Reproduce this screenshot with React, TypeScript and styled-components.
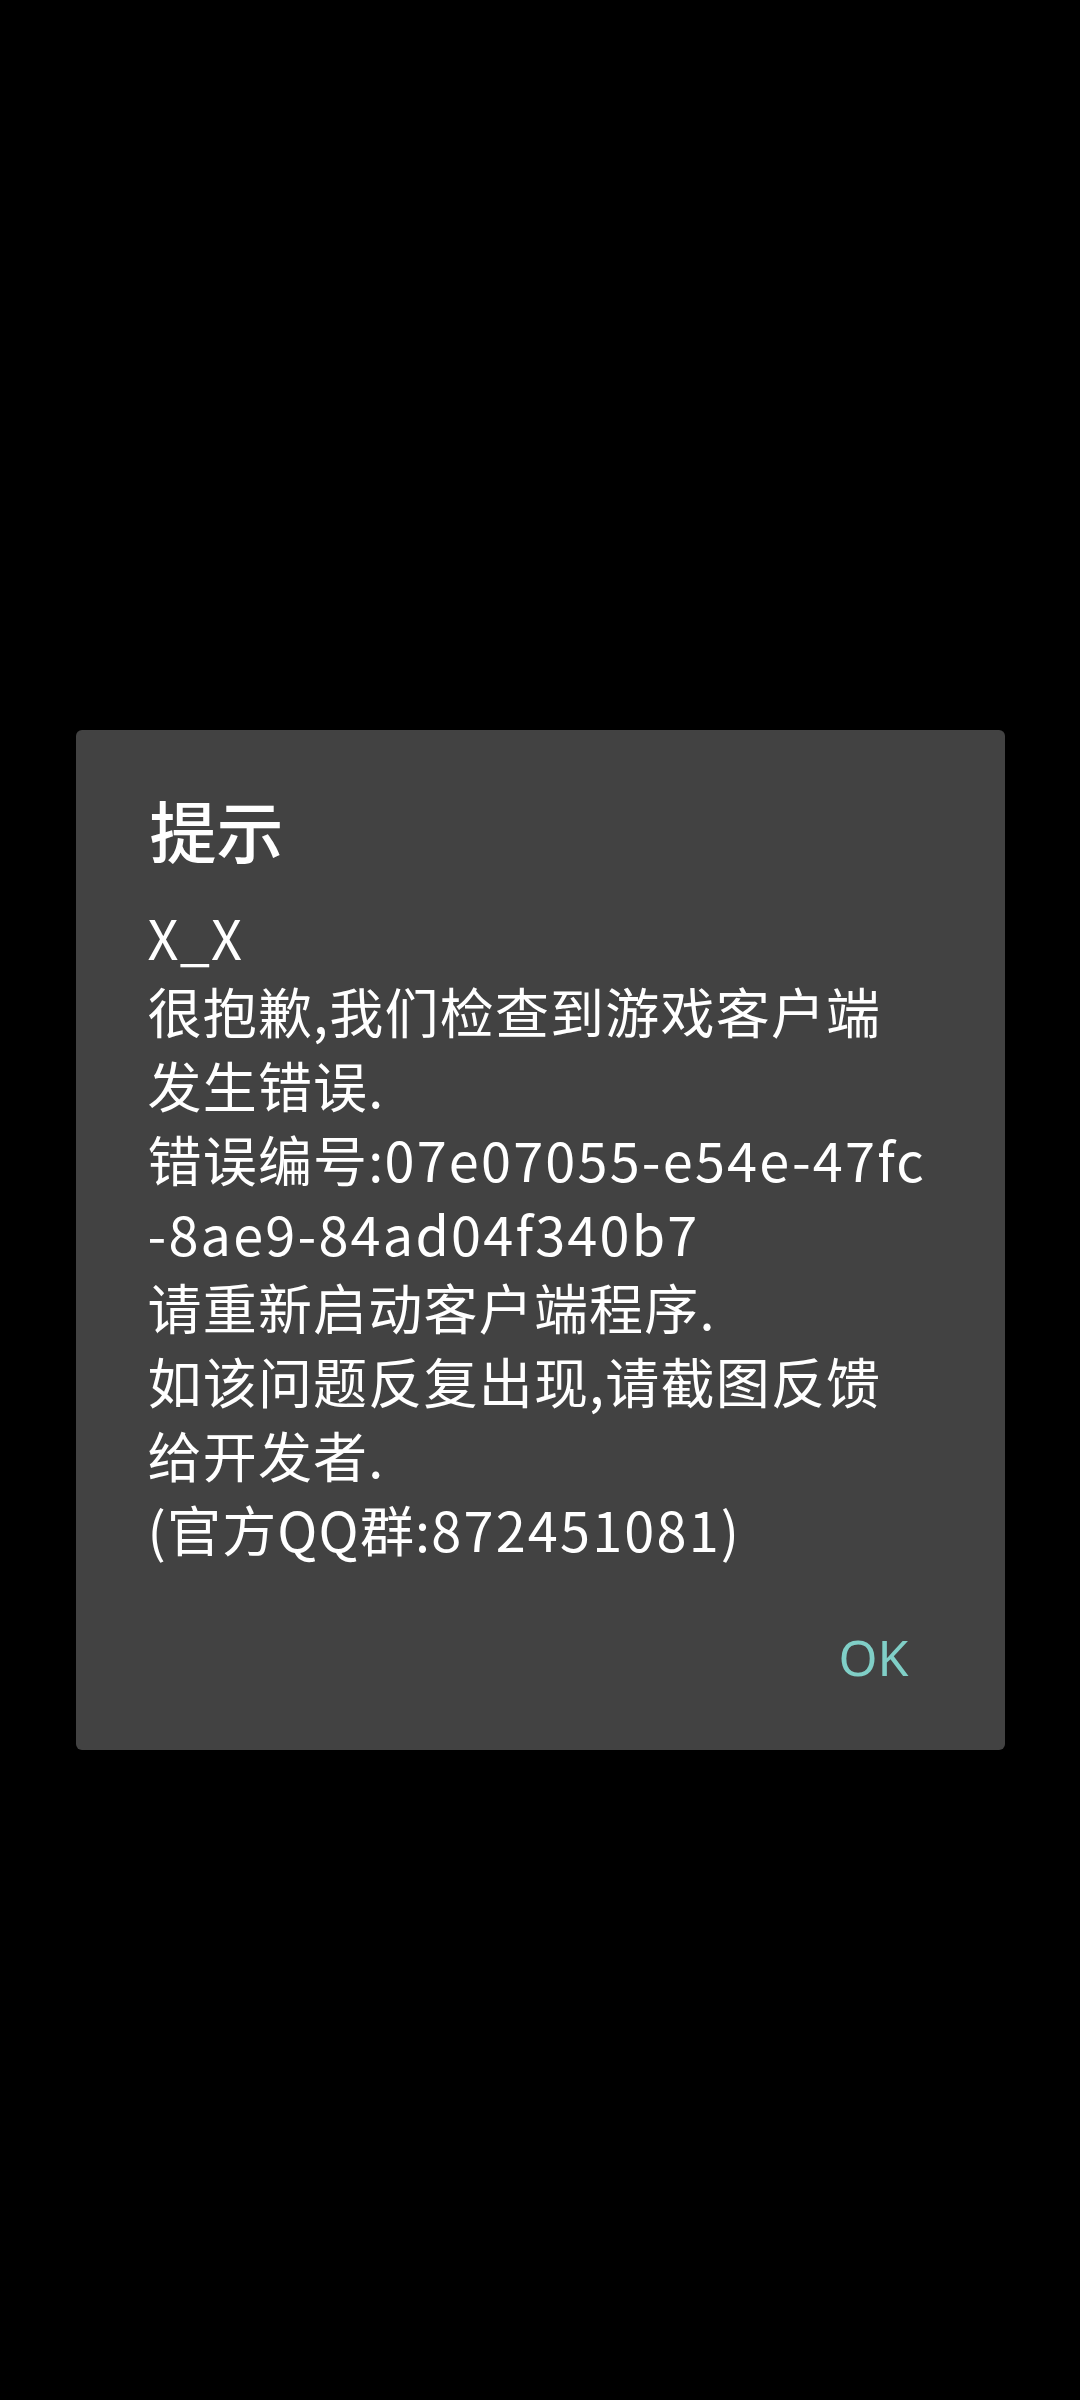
import styled, { createGlobalStyle } from "styled-components";

const GlobalStyle = createGlobalStyle`
    html, body {
        margin: 0;
        padding: 0;
        background: #000000;
    }
    body {
        font-family: "Noto Sans CJK SC", "Noto Sans", sans-serif;
    }
`;

const Screen = styled.div`
    width: 1080px;
    min-height: 2400px;
    background: #000000;
    display: flex;
    flex-direction: column;
    align-items: center;
    padding-top: 730px;
    box-sizing: border-box;
`;

const Dialog = styled.div`
    width: 929px;
    background: #424242;
    border-radius: 6px;
    display: flex;
    flex-direction: column;
    padding-top: 58px;
    box-sizing: border-box;
`;

const Title = styled.div`
    padding: 0 72px 0 74px;
    font-family: "Noto Sans CJK SC", sans-serif;
    font-size: 67px;
    font-weight: 500;
    line-height: 82px;
    color: #ffffff;
`;

const Message = styled.div`
    margin-top: 30px;
    padding: 0 72px;
    display: flex;
    flex-direction: column;
`;

const Line = styled.div`
    font-family: "Noto Sans CJK SC", sans-serif;
    font-size: 54px;
    line-height: 74px;
    letter-spacing: 1.2px;
    color: #ffffff;
    white-space: nowrap;
`;

const Code = styled.span`
    letter-spacing: 2.2px;
`;

const ButtonBar = styled.div`
    display: flex;
    justify-content: flex-end;
    padding: 61px 96px 63px 0;
`;

const TextButton = styled.button`
    background: none;
    border: none;
    padding: 0;
    font-family: "Noto Sans", "Roboto", sans-serif;
    font-size: 50px;
    font-weight: 400;
    line-height: 60px;
    color: #80cfc7;
`;

function App() {
    return (
        <>
            <GlobalStyle />
            <Screen>
                <Dialog>
                    <Title>提示</Title>
                    <Message>
                        <Line>X_X</Line>
                        <Line>很抱歉,我们检查到游戏客户端</Line>
                        <Line>发生错误.</Line>
                        <Line>错误编号:<Code>07e07055-e54e-47fc</Code></Line>
                        <Line><Code>-8ae9-84ad04f340b7</Code></Line>
                        <Line>请重新启动客户端程序.</Line>
                        <Line>如该问题反复出现,请截图反馈</Line>
                        <Line>给开发者.</Line>
                        <Line>(官方QQ群:<Code>872451081</Code>)</Line>
                    </Message>
                    <ButtonBar>
                        <TextButton>OK</TextButton>
                    </ButtonBar>
                </Dialog>
            </Screen>
        </>
    );
}

export default App;
